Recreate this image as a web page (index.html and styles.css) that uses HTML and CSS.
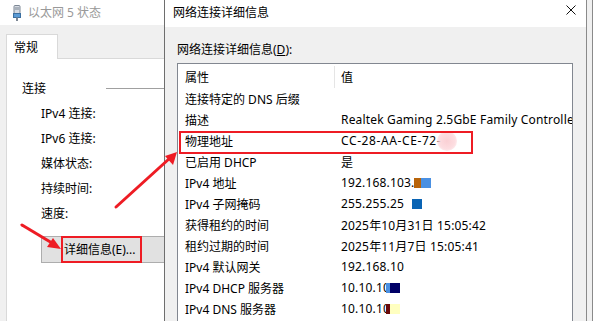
FILE: index.html
```html
<!DOCTYPE html>
<html lang="zh-CN">
<head>
<meta charset="utf-8">
<title>网络连接详细信息</title>
<link rel="stylesheet" href="styles.css">
</head>
<body>
<div class="screen">
  <div class="win-left">
    <div class="titlebar">
      <svg class="ticon" width="10" height="16" viewBox="0 0 10 16">
        <rect x="2" y="0.5" width="6" height="8" rx="1" fill="#d6dbe3" stroke="#7d8794"/>
        <rect x="3.5" y="2" width="1" height="3" fill="#7d8794"/>
        <rect x="5.5" y="2" width="1" height="3" fill="#7d8794"/>
        <rect x="1.5" y="8.5" width="7" height="4" fill="#5b9bd5" stroke="#3b6fa0"/>
        <rect x="4" y="12.5" width="2" height="3.5" fill="#7d8794"/>
      </svg>
      <span class="ttext inactive">以太网 5 状态</span>
    </div>
    <div class="lbody">
      <div class="tabs"><div class="tab">常规</div></div>
      <div class="panel">
        <div class="group"><span>连接</span><span class="gline"></span></div>
        <ul class="props">
          <li>IPv4 连接:</li>
          <li>IPv6 连接:</li>
          <li>媒体状态:</li>
          <li>持续时间:</li>
          <li>速度:</li>
        </ul>
        <div class="btnrow"><button class="btn"><span class="mark">详细信息(E)...</span></button></div>
      </div>
    </div>
  </div>

  <div class="win-right">
    <div class="titlebar rtitle">
      <span class="ttext">网络连接详细信息</span>
      <svg class="close" width="10" height="10" viewBox="0 0 10 10"><path d="M0.5 0.5 L9.5 9.5 M9.5 0.5 L0.5 9.5" stroke="#111" stroke-width="1"/></svg>
    </div>
    <div class="rbody">
      <div class="lbl">网络连接详细信息(<u>D</u>):</div>
      <div class="listview">
        <div class="lhead"><span class="c1">属性</span><span class="c2 divd">值</span></div>
        <div class="row"><span class="c1">连接特定的 DNS 后缀</span><span class="c2"></span></div>
        <div class="row"><span class="c1">描述</span><span class="c2">Realtek Gaming 2.5GbE Family Controller</span></div>
        <div class="row hl"><span class="c1">物理地址</span><span class="c2 mac">CC-28-AA-CE-72-<i class="blur"></i></span></div>
        <div class="row"><span class="c1">已启用 DHCP</span><span class="c2">是</span></div>
        <div class="row"><span class="c1">IPv4 地址</span><span class="c2">192.168.103.<i class="blk" style="background:#b8640a;width:7px"></i><i class="blk" style="background:#4a90e2;width:10px"></i></span></div>
        <div class="row"><span class="c1">IPv4 子网掩码</span><span class="c2">255.255.25<i class="blk gap" style="background:#0a64b4;width:10px"></i></span></div>
        <div class="row"><span class="c1">获得租约的时间</span><span class="c2">2025年10月31日 15:05:42</span></div>
        <div class="row"><span class="c1">租约过期的时间</span><span class="c2">2025年11月7日 15:05:41</span></div>
        <div class="row"><span class="c1">IPv4 默认网关</span><span class="c2">192.168.10</span></div>
        <div class="row"><span class="c1">IPv4 DHCP 服务器</span><span class="c2">10.10.10<i class="cover"><i class="blk" style="background:#4a90e2;width:4px"></i><i class="blk" style="background:#000066;width:10px"></i></i></span></div>
        <div class="row"><span class="c1">IPv4 DNS 服务器</span><span class="c2">10.10.10.<i class="cover"><i class="blk" style="background:#6a0a0a;width:4px"></i><i class="blk" style="background:#ffffc0;width:10px"></i></i></span></div>
      </div>
    </div>
  </div>
  <div class="edge"></div>

  <svg class="arrows" width="600" height="321" viewBox="0 0 600 321">
    <g stroke="#ee1c24" stroke-width="3" stroke-linecap="round" fill="#ee1c24">
      <line x1="22" y1="225" x2="52" y2="243"/>
      <line x1="116" y1="207" x2="170" y2="158"/>
    </g>
    <polygon points="61,249 47,247 53,238" fill="#ee1c24"/>
    <polygon points="177,152 173,165 165,156" fill="#ee1c24"/>
  </svg>
</div>
</body>
</html>
```
FILE: styles.css
```css
* { box-sizing: border-box; }
html, body { margin: 0; padding: 0; background: #fff; }
body {
  font-family: "Noto Sans", "Noto Sans CJK SC", sans-serif;
  font-size: 12px;
  color: #000;
}
.screen {
  position: relative;
  width: 600px;
  height: 321px;
  overflow: hidden;
  display: flex;
}
.win-left {
  width: 164px;
  flex: none;
  display: flex;
  flex-direction: column;
  overflow: hidden;
}
.titlebar {
  height: 25px;
  background: #fff;
  display: flex;
  align-items: center;
  flex: none;
}
.ticon { margin-left: 12px; margin-right: 6px; }
.ttext { white-space: nowrap; line-height: 16px; }
.inactive { color: #999; }
.lbody {
  flex: 1;
  background: #f0f0f0;
  display: flex;
  flex-direction: column;
  padding-left: 6px;
}
.tabs { padding-top: 9px; display: flex; }
.tab {
  height: 25px;
  padding: 3px 7px 0 7px;
  background: #fff;
  border: 1px solid #d9d9d9;
  border-bottom: none;
  width: 52px;
  margin-bottom: -1px;
  position: relative;
  z-index: 1;
}
.panel {
  flex: 1;
  background: #fff;
  border-top: 1px solid #d9d9d9;
  border-left: 1px solid #d9d9d9;
  padding-left: 15px;
}
.group {
  display: flex;
  align-items: center;
  margin-top: 20px;
  height: 18px;
}
.gline { flex: 1; height: 1px; background: #a0a0a0; margin-left: 60px; }
.props {
  list-style: none;
  margin: 4px 0 0 19px;
  padding: 0;
}
.props li { height: 25px; line-height: 25px; white-space: nowrap; }
.btnrow { margin-top: 10px; padding-left: 19px; }
.btn {
  display: block;
  width: 130px;
  height: 27px;
  background: #e1e1e1;
  border: 1px solid #adadad;
  padding: 0 0 0 20px;
  font: inherit;
  text-align: left;
  color: #000;
}
.mark {
  display: inline-block;
  height: 27px;
  line-height: 23px;
  border: 2px solid #ee1c24;
  padding: 0 4px 0 1px;
  margin-top: -1px;
  margin-left: -1px;
}
.win-right {
  width: 423px;
  flex: none;
  border-left: 1px solid #6e6e6e;
  border-right: 1px solid #8a8a8a;
  display: flex;
  flex-direction: column;
  background: #f0f0f0;
}
.rtitle { height: 27px; justify-content: space-between; padding: 0 10px 2px 8px; }
.close { margin-bottom: 5px; }
.rbody { flex: 1; padding: 15px 13px 0 12px; }
.lbl { height: 21px; line-height: 16px; white-space: nowrap; }
.listview {
  background: #fff;
  border: 1px solid #828790;
  height: 300px;
  overflow: hidden;
}
.lhead, .row { display: flex; white-space: nowrap; }
.lhead { height: 24px; align-items: center; padding-top: 2px; }
.row { height: 21px; align-items: center; }
.c1 { width: 156px; flex: none; padding-left: 7px; }
.c2 {
  flex: none;
  padding-left: 7px;
  display: flex;
  align-items: center;
  position: relative;
  letter-spacing: 0.17px;
}
.mac { letter-spacing: 0.6px; }
.divd { border-left: 1px solid #e5e5e5; height: 22px; padding-left: 6px; align-self: flex-end; align-items: center; letter-spacing: 0; }
.hl { position: relative; }
.hl::after {
  content: "";
  position: absolute;
  left: 1px;
  top: 1px;
  width: 290px;
  height: 19px;
  border: 2px solid #ee1c24;
  pointer-events: none;
}
.blur {
  display: inline-block;
  width: 20px;
  height: 20px;
  border-radius: 50%;
  background: radial-gradient(circle, rgba(250,205,210,0.95) 0%, rgba(252,215,219,0.85) 55%, rgba(255,255,255,0) 100%);
  margin-left: -4px;
}
.blk { display: inline-block; height: 10px; }
.gap { margin-left: 8px; }
.cover {
  position: absolute;
  left: 52px;
  top: 50%;
  margin-top: -5px;
  display: flex;
  background: #fff;
}
.edge {
  width: 6px;
  flex: none;
  background: #f0f0f0;
  border-right: 1px solid #8a8a8a;
}
.arrows { position: absolute; left: 0; top: 0; pointer-events: none; }
```
